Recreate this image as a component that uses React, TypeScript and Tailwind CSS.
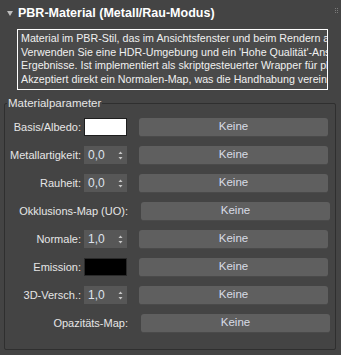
import React from 'react';

const font = { fontFamily: '"Liberation Sans", "DejaVu Sans", sans-serif' };

const lines = [
  'Material im PBR-Stil, das im Ansichtsfenster und beim Rendern am besten aussieht.',
  "Verwenden Sie eine HDR-Umgebung und ein 'Hohe Qualität'-Ansichtsfenster für beste",
  'Ergebnisse. Ist implementiert als skriptgesteuerter Wrapper für physisches Material.',
  'Akzeptiert direkt ein Normalen-Map, was die Handhabung vereinfacht.',
];

type Ctl = 'white' | 'black' | 'spin' | 'none';

const rows: { label: string; ctl: Ctl; value?: string }[] = [
  { label: 'Basis/Albedo:', ctl: 'white' },
  { label: 'Metallartigkeit:', ctl: 'spin', value: '0,0' },
  { label: 'Rauheit:', ctl: 'spin', value: '0,0' },
  { label: 'Okklusions-Map (UO):', ctl: 'none' },
  { label: 'Normale:', ctl: 'spin', value: '1,0' },
  { label: 'Emission:', ctl: 'black' },
  { label: '3D-Versch.:', ctl: 'spin', value: '1,0' },
  { label: 'Opazitäts-Map:', ctl: 'none' },
];

function Spinner({ value }: { value: string }) {
  return (
    <div className="flex h-[18px] w-[43px] items-center justify-between bg-[#575757] pl-[4px] pr-[4px] text-[12px] text-[#dfe3ee]">
      <span>{value}</span>
      <svg width="5" height="9" viewBox="0 0 5 9">
        <path d="M2.5 0.5 L4.5 3 L0.5 3 Z" fill="#c8c8c8" />
        <path d="M2.5 8.5 L4.5 6 L0.5 6 Z" fill="#c8c8c8" />
      </svg>
    </div>
  );
}

function Row({ label, ctl, value }: { label: string; ctl: Ctl; value?: string }) {
  const wide = ctl === 'none';
  return (
    <div className="flex h-[28px] items-center">
      <div
        className={`${wide ? 'w-[124px]' : 'w-[77px]'} shrink-0 whitespace-nowrap pr-[1px] text-right text-[11px] text-[#e6e6e6]`}
      >
        {label}
      </div>
      {!wide && (
        <div className="ml-[2px] shrink-0">
          {ctl === 'white' && <div className="h-[18px] w-[43px] border border-[#1e1e1e] bg-white" />}
          {ctl === 'black' && <div className="h-[18px] w-[43px] border border-[#2a2a2a] bg-black" />}
          {ctl === 'spin' && <Spinner value={value ?? ''} />}
        </div>
      )}
      <button className="ml-[12px] flex h-[19px] w-[189px] shrink-0 items-center justify-center rounded-[3px] border-b border-[#4a4a4a] bg-[#5f5f5f] text-[11.5px] text-[#d8dce6]">
        Keine
      </button>
    </div>
  );
}

export default function App() {
  return (
    <div className="h-[355px] w-[341px] overflow-hidden bg-[#444444]" style={font}>
      <div className="relative flex h-[27px] items-center pl-[7px]">
        <svg width="6" height="5" viewBox="0 0 6 5" className="mr-[5px]">
          <path d="M0 0 L6 0 L3 5 Z" fill="#bdbdbd" />
        </svg>
        <span className="text-[12.5px] font-bold text-white">PBR-Material (Metall/Rau-Modus)</span>
        <div className="absolute right-[3px] top-[8px] grid grid-cols-2 gap-[1px]">
          {[0, 1, 2, 3, 4, 5].map((i) => (
            <div key={i} className="h-[1px] w-[1px] bg-[#7a7a7a]" />
          ))}
        </div>
      </div>

      <div className="ml-[17px] mt-[2px] h-[61px] w-[311px] overflow-hidden border border-white bg-[#4a4a4a] px-[3px] py-[2px]">
        {lines.map((l) => (
          <div key={l} className="h-[13.5px] whitespace-nowrap text-[10.7px] leading-[13.5px] text-[#f0f0f0]">
            {l}
          </div>
        ))}
      </div>

      <fieldset className="mx-[4px] mt-[6px] h-[254px] w-[332px] rounded-[2px] border border-[#2f2f2f] px-0 pb-0 pt-[3px]">
        <legend className="ml-[2px] px-[1px] text-[11.5px] leading-[14px] text-[#e6e6e6]">Materialparameter</legend>
        <div className="flex flex-col">
          {rows.map((r) => (
            <Row key={r.label} {...r} />
          ))}
        </div>
      </fieldset>
    </div>
  );
}
